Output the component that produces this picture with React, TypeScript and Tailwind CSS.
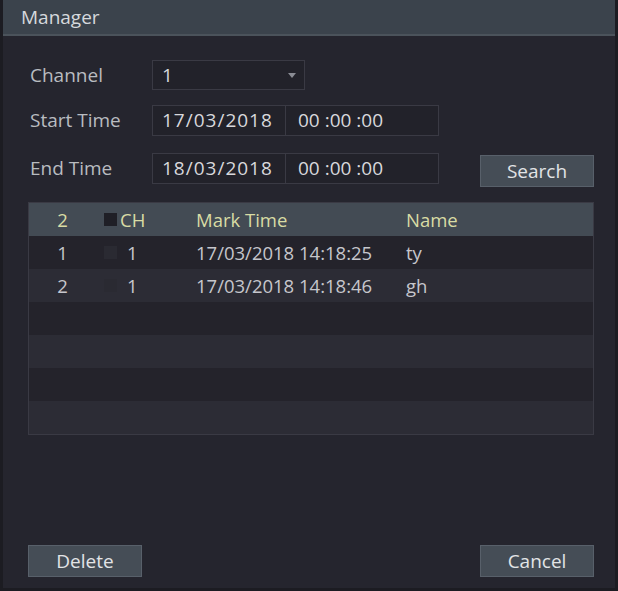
import React from "react";

type Mark = { no: number; ch: string; time: string; name: string };

const marks: Mark[] = [
  { no: 1, ch: "1", time: "17/03/2018 14:18:25", name: "ty" },
  { no: 2, ch: "1", time: "17/03/2018 14:18:46", name: "gh" },
];

const font = { fontFamily: '"Open Sans", "Noto Sans", sans-serif' };

function Field({ children, className }: { children: React.ReactNode; className: string }) {
  return (
    <div
      className={`flex items-center border border-[#3a3a44] bg-[#22222a] pl-[9px] text-[19px] text-[#d8d8dc] ${className}`}
    >
      {children}
    </div>
  );
}

function Button({ label }: { label: string }) {
  return (
    <button className="flex h-[32px] w-[114px] items-center justify-center border border-[#58606a] bg-[#454d56] text-[19px] text-[#e2e4e6]">
      {label}
    </button>
  );
}

export default function App() {
  const rows = [...marks, ...Array.from({ length: 4 }, () => null)];

  return (
    <div
      className="flex h-[591px] w-[618px] flex-col border-x-[3px] border-b-[3px] border-[#1c1c22] bg-[#25252e]"
      style={font}
    >
      <div className="flex h-[36px] items-center border-b-2 border-[#4b535b] bg-[#3b434c] pl-[18px] text-[19px] text-[#d6d9dc]">
        Manager
      </div>

      <div className="flex flex-1 flex-col pt-[24px] pr-[21px] pb-[11px] pl-[25px]">
        <div className="flex flex-col">
          <div className="flex items-center">
            <span className="w-[124px] pl-[2px] text-[19px] text-[#b9bcc0]">Channel</span>
            <Field className="h-[30px] w-[153px] justify-between pr-[8px]">
              <span>1</span>
              <svg width="8" height="5" viewBox="0 0 8 5">
                <path d="M0 0h8L4 5z" fill="#8a8c94" />
              </svg>
            </Field>
          </div>
          <div className="mt-[15px] flex items-center">
            <span className="w-[124px] pl-[2px] text-[19px] text-[#b9bcc0]">Start Time</span>
            <Field className="h-[31px] w-[134px] tracking-[1px]">17/03/2018</Field>
            <Field className="h-[31px] w-[153px] border-l-0 pl-[12px]">00 :00 :00</Field>
          </div>
          <div className="mt-[17px] flex items-start">
            <div className="flex h-[31px] items-center">
              <span className="w-[124px] pl-[2px] text-[19px] text-[#b9bcc0]">End Time</span>
              <Field className="h-[31px] w-[134px] tracking-[1px]">18/03/2018</Field>
              <Field className="h-[31px] w-[153px] border-l-0 pl-[12px]">00 :00 :00</Field>
            </div>
            <div className="ml-auto mt-[2px]">
              <Button label="Search" />
            </div>
          </div>
        </div>

        <div className="mt-[15px] border border-[#3a3a44] text-[18.5px]">
          <div className="flex h-[33px] items-center bg-[#434b54] text-[#d9dca4]">
            <span className="w-[67px] text-center">2</span>
            <span className="flex w-[100px] items-center">
              <span className="mr-[3px] ml-[8px] h-[13px] w-[13px] bg-[#1f1f26]" />
              CH
            </span>
            <span className="w-[210px]">Mark Time</span>
            <span>Name</span>
          </div>
          {rows.map((r, i) => (
            <div
              key={i}
              className={`flex h-[33px] items-center text-[#c6c6cc] ${
                i % 2 === 0 ? "bg-[#24232b]" : "bg-[#2c2c35]"
              }`}
            >
              {r && (
                <>
                  <span className="w-[67px] text-center">{r.no}</span>
                  <span className="flex w-[100px] items-center">
                    <span className="mr-[10px] ml-[8px] h-[13px] w-[13px] bg-[#2a2a32]" />
                    {r.ch}
                  </span>
                  <span className="w-[210px]">{r.time}</span>
                  <span>{r.name}</span>
                </>
              )}
            </div>
          ))}
        </div>

        <div className="mt-auto flex justify-between">
          <Button label="Delete" />
          <Button label="Cancel" />
        </div>
      </div>
    </div>
  );
}
